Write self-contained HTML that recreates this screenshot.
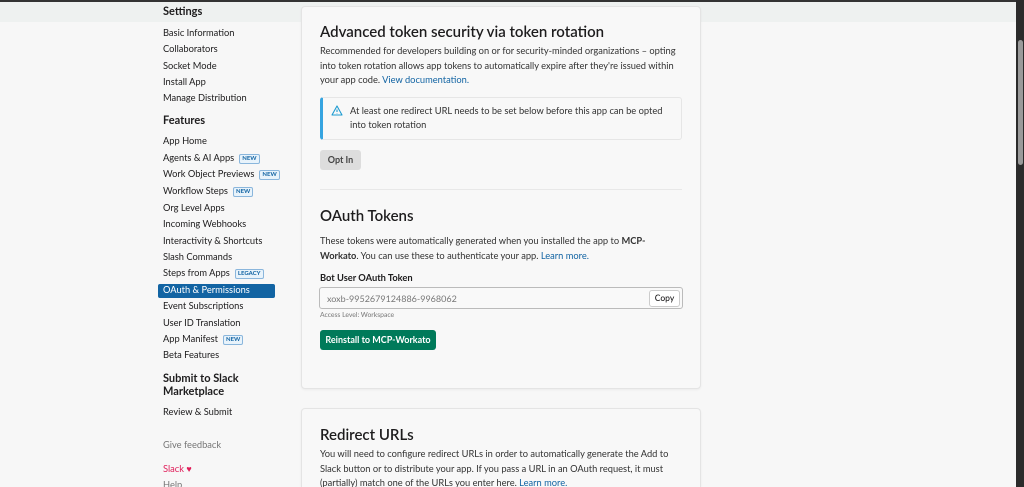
<!DOCTYPE html>
<html style="overflow:hidden;height:487px"><head><style>
*{margin:0;padding:0;box-sizing:border-box}
body{width:1024px;height:487px;overflow:hidden;background:#f7f7f7;font-family:"Lato","Liberation Sans",sans-serif;color:#1d1c1d;position:relative}
.abs{position:absolute;white-space:nowrap}
.topbar{position:absolute;left:0;top:0;width:1016px;height:2px;background:#333}
.band{position:absolute;left:0;top:2px;width:1016px;height:20px;background:#eef1f0}
.sb{position:absolute;right:0;top:0;width:8px;height:487px;background:#2b2b2b}
.thumb{position:absolute;right:1px;top:40px;width:5px;height:125px;background:#9a9a9a;border-radius:3px}
.nav{font-size:9.3px;color:#1d1c1d;left:163px}
.h{font-size:11px;font-weight:bold;left:163px}
.badge{display:inline-block;font-size:6px;color:#1264a3;border:1px solid #8ab6dc;background:#e8f3fb;border-radius:2px;padding:0 2px;margin-left:5px;line-height:8px;vertical-align:1px;font-weight:bold}
.card{position:absolute;left:301px;width:400px;background:#f8f8f8;border:1px solid #e4e4e4;border-radius:4px;box-shadow:0 1px 2px rgba(0,0,0,.05)}
.t{font-size:15px;font-weight:600;left:320px}
.p{font-size:9.3px;color:#333;line-height:14.5px;left:320px;white-space:normal;width:362px}
a{color:#1264a3;text-decoration:none}
</style></head><body>
<div class="band"></div><div class="topbar"></div>
<div class="sb"><div class="thumb"></div></div>

<div class="abs h" style="top:5px">Settings</div>
<div class="abs nav" style="top:27px">Basic Information</div>
<div class="abs nav" style="top:43px">Collaborators</div>
<div class="abs nav" style="top:60px">Socket Mode</div>
<div class="abs nav" style="top:76px">Install App</div>
<div class="abs nav" style="top:92px">Manage Distribution</div>
<div class="abs h" style="top:114px">Features</div>
<div class="abs nav" style="top:135px">App Home</div>
<div class="abs nav" style="top:152px">Agents &amp; AI Apps<span class="badge">NEW</span></div>
<div class="abs nav" style="top:168px">Work Object Previews<span class="badge">NEW</span></div>
<div class="abs nav" style="top:185px">Workflow Steps<span class="badge">NEW</span></div>
<div class="abs nav" style="top:202px">Org Level Apps</div>
<div class="abs nav" style="top:218px">Incoming Webhooks</div>
<div class="abs nav" style="top:235px">Interactivity &amp; Shortcuts</div>
<div class="abs nav" style="top:251px">Slash Commands</div>
<div class="abs nav" style="top:267px">Steps from Apps<span class="badge">LEGACY</span></div>
<div class="abs" style="left:158px;top:284px;width:117px;height:14px;background:#1264a3;border-radius:2px"></div>
<div class="abs nav" style="top:284px;color:#fff">OAuth &amp; Permissions</div>
<div class="abs nav" style="top:300px">Event Subscriptions</div>
<div class="abs nav" style="top:317px">User ID Translation</div>
<div class="abs nav" style="top:333px">App Manifest<span class="badge">NEW</span></div>
<div class="abs nav" style="top:349px">Beta Features</div>
<div class="abs h" style="top:372px;line-height:13px">Submit to Slack<br>Marketplace</div>
<div class="abs nav" style="top:406px">Review &amp; Submit</div>
<div class="abs nav" style="top:439px;color:#777">Give feedback</div>
<div class="abs nav" style="top:463px;color:#e01e5a">Slack <span style="font-size:9px">♥</span></div>
<div class="abs nav" style="top:479px;color:#777">Help</div>

<div class="card" style="top:6px;height:383px"></div>
<div class="card" style="top:408px;height:79px;border-bottom:none;border-radius:4px 4px 0 0"></div>

<div class="abs t" style="top:23px">Advanced token security via token rotation</div>
<div class="abs p" style="top:44px">Recommended for developers building on or for security-minded organizations – opting into token rotation allows app tokens to automatically expire after they're issued within your app code. <a>View documentation.</a></div>
<div class="abs" style="left:320px;top:97px;width:362px;height:43px;border:1px solid #e6e6e6;border-left:3px solid #36a4e0;border-radius:3px;background:#f8f8f8"></div>
<svg class="abs" style="left:331px;top:105px" width="12" height="11" viewBox="0 0 12 11"><path d="M6 1L11 10H1Z" fill="none" stroke="#1d9bd1" stroke-width="1.1" stroke-linejoin="round"/><path d="M6 4.5V7M6 8.3V8.6" stroke="#1d9bd1" stroke-width="1.1"/></svg>
<div class="abs p" style="left:350px;top:104px;width:325px;line-height:14px">At least one redirect URL needs to be set below before this app can be opted into token rotation</div>
<div class="abs" style="left:320px;top:150px;width:41px;height:20px;background:#ddd;border-radius:3px;font-size:9px;font-weight:bold;color:#444;text-align:center;line-height:20px">Opt In</div>
<div class="abs" style="left:320px;top:189px;width:362px;height:1px;background:#e8e8e8"></div>
<div class="abs t" style="top:207px">OAuth Tokens</div>
<div class="abs p" style="top:234px;width:350px">These tokens were automatically generated when you installed the app to <b>MCP-Workato</b>. You can use these to authenticate your app. <a>Learn more.</a></div>
<div class="abs" style="left:320px;top:272px;font-size:9.3px;font-weight:bold">Bot User OAuth Token</div>
<div class="abs" style="left:319px;top:287px;width:364px;height:22px;border:1px solid #bbb;border-radius:3px;background:#f9f9f9"></div>
<div class="abs" style="left:327px;top:293px;font-size:9px;color:#777">xoxb-9952679124886-9968062</div>
<div class="abs" style="left:649px;top:290px;width:31px;height:17px;border:1px solid #ccc;border-radius:3px;background:#fff;font-size:8.5px;text-align:center;line-height:15px;font-weight:500">Copy</div>
<div class="abs" style="left:320px;top:311px;font-size:6.8px;color:#777">Access Level: Workspace</div>
<div class="abs" style="left:320px;top:330px;width:116px;height:20px;background:#007a5a;border-radius:3px;color:#fff;font-size:9px;font-weight:bold;text-align:center;line-height:20px">Reinstall to MCP-Workato</div>

<div class="abs t" style="top:426px">Redirect URLs</div>
<div class="abs p" style="top:447px;width:370px">You will need to configure redirect URLs in order to automatically generate the Add to Slack button or to distribute your app. If you pass a URL in an OAuth request, it must (partially) match one of the URLs you enter here. <a>Learn more.</a></div>
</body></html>
